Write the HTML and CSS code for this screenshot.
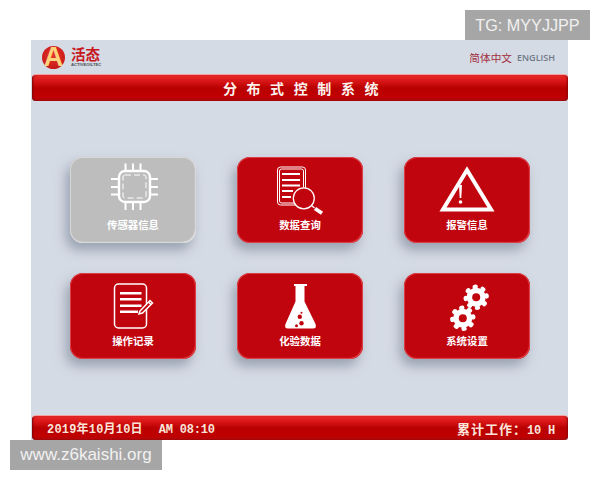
FILE: index.html
```html
<!DOCTYPE html>
<html lang="zh-CN">
<head>
    <meta charset="UTF-8">
    <meta name="viewport" content="width=device-width, initial-scale=1.0">
    <title>分布式控制系统</title>
    <link rel="stylesheet" href="styles.css">
</head>
<body>
    <div class="screen">
        <div class="top">
            <div class="logo">
                <div class="logo-mark">A</div>
                <div class="logo-text">
                    <div class="logo-cn">活态</div>
                    <div class="logo-en">ACTIVEOILTEC</div>
                </div>
            </div>
            <div class="lang">
                <span class="lang-cn">简体中文</span>
                <span class="lang-en">ENGLISH</span>
            </div>
        </div>

        <div class="bar title-bar">分布式控制系统</div>

        <div class="menu">
            <div class="card card-off">
                <svg class="icon" viewBox="0 0 56 56" fill="none" stroke="#fff">
                    <rect x="14" y="12" width="31" height="31" rx="6" stroke-width="2.400"/>
                    <rect x="18" y="16" width="23" height="23" rx="2" stroke-width="1" stroke-dasharray="6 3"/>
                    <path stroke-width="2" d="M20.500 4.500V11M28 4.500V11M35.500 4.500V11M20.500 44V51M28 44V51M35.500 44V51M6 20H13M6 28H13M6 35.500H13M46 20H53M46 28H53M46 35.500H53"/>
                </svg>
                <div class="card-label">传感器信息</div>
            </div>

            <div class="card">
                <svg class="icon" viewBox="0 0 56 56" fill="none" stroke="#fff">
                    <rect x="5.500" y="8" width="28" height="38" rx="3" stroke-width="1"/>
                    <rect x="7.500" y="10" width="24" height="34" rx="2" stroke-width="1"/>
                    <path stroke-width="2.200" d="M10 15H28M10 21H28M10 26.500H28M10 32H21M10 38H19"/>
                    <circle cx="31.800" cy="39.300" r="10.500" fill="#c1050f" stroke-width="1.300"/>
                    <path stroke-width="1.300" d="M39.500 46.500L42.500 49"/>
                    <path stroke-width="3.800" d="M43 49.500L50 54.300"/>
                </svg>
                <div class="card-label">数据查询</div>
            </div>

            <div class="card">
                <svg class="icon" viewBox="0 0 56 56" fill="none">
                    <path d="M28 11L4 50.500H52Z" stroke="#fff" stroke-width="4"/>
                    <path d="M20 26H23L22.300 39H20.700Z" fill="#fff"/>
                    <circle cx="21.500" cy="43" r="1.800" fill="#fff"/>
                </svg>
                <div class="card-label">报警信息</div>
            </div>

            <div class="card">
                <svg class="icon" viewBox="0 0 56 56" fill="none" stroke="#fff">
                    <rect x="9.500" y="9" width="32" height="44" rx="4" stroke-width="1.500"/>
                    <path stroke-width="2.400" d="M15 18.300H36.500M15 24.300H36.500M15 30.700H36.500M15 36.700H33"/>
                    <path d="M35 36L45 25.500L47.500 28L37.500 38L34 39Z" fill="#c1050f" stroke-width="1.500"/>
                    <path d="M43.500 27L46 29.500" stroke-width="1.500"/>
                </svg>
                <div class="card-label">操作记录</div>
            </div>

            <div class="card">
                <svg class="icon" viewBox="0 0 56 56">
                    <path d="M22 9H35V11H32.500V26.500L43.500 49Q45 53.500 41 53.500H16Q12 53.500 13.500 49L23.500 26.500V11H22Z" fill="#fff"/>
                    <circle cx="29.500" cy="37.700" r="1" fill="#c1050f"/>
                    <circle cx="27.800" cy="41.700" r="2.200" fill="#c1050f"/>
                    <circle cx="29.500" cy="48.300" r="2.200" fill="#c1050f"/>
                    <circle cx="24.500" cy="50.700" r="1.500" fill="#c1050f"/>
                </svg>
                <div class="card-label">化验数据</div>
            </div>

            <div class="card">
                <svg class="icon" viewBox="0 0 56 56">
                    <circle cx="37.200" cy="22.300" r="9.500" fill="#fff"/>
                    <circle cx="37.200" cy="22.300" r="10.500" fill="none" stroke="#fff" stroke-width="4.400" stroke-linecap="round" stroke-dasharray="1 7.250" transform="rotate(-10 37.200 22.300)"/>
                    <circle cx="37.200" cy="22.300" r="4" fill="#c1050f"/>
                    <circle cx="23.800" cy="43.300" r="9.500" fill="#fff"/>
                    <circle cx="23.800" cy="43.300" r="10.500" fill="none" stroke="#fff" stroke-width="4.400" stroke-linecap="round" stroke-dasharray="1 7.250" transform="rotate(-10 23.800 43.300)"/>
                    <circle cx="23.800" cy="43.300" r="4" fill="#c1050f"/>
                </svg>
                <div class="card-label">系统设置</div>
            </div>
        </div>

        <div class="bar foot-bar">
            <div class="foot-date">2019年10月10日<span class="foot-time">AM 08:10</span></div>
            <div class="foot-work">累计工作：<span class="foot-hours">10 H</span></div>
        </div>
    </div>

    <div class="mark mark-tg">TG: MYYJJPP</div>
    <div class="mark mark-site">www.z6kaishi.org</div>
</body>
</html>
```

FILE: styles.css
```css
body {
    font-family: "Noto Sans CJK SC", "Liberation Sans", sans-serif;
    background-color: #fff;
    margin: 0;
    padding: 40px 0 0 31px;
    height: 440px;
    overflow: hidden;
    position: relative;
}
.screen {
    width: 537px;
    height: 400px;
    background-color: #d5dbe5;
    display: flex;
    flex-direction: column;
}
.top {
    height: 34px;
    flex: none;
    display: flex;
    align-items: center;
    justify-content: space-between;
    padding: 0 13px 0 11px;
}
.logo {
    display: flex;
    align-items: center;
    gap: 6px;
}
.logo-mark {
    width: 23px;
    height: 23px;
    border-radius: 50%;
    background: radial-gradient(circle at 50% 40%, #e8342a, #bb0f14);
    color: #fcd27c;
    font-family: "Liberation Sans", sans-serif;
    font-size: 27px;
    font-weight: bold;
    line-height: 23px;
    text-align: center;
}
.logo-text {
    margin-top: -2px;
}
.logo-cn {
    color: #c8171d;
    font-size: 14.500px;
    font-weight: bold;
    line-height: 16px;
}
.logo-en {
    color: #4c4d55;
    font-family: "Liberation Sans", sans-serif;
    font-size: 4.200px;
    font-weight: bold;
    line-height: 5px;
}
.lang {
    display: flex;
    align-items: center;
    gap: 5px;
}
.lang-cn {
    color: #a3303f;
    font-size: 10.700px;
}
.lang-en {
    color: #6f7988;
    font-family: "Open Sans", sans-serif;
    font-size: 9px;
    font-weight: 600;
}
.bar {
    flex: none;
    margin-left: 1px;
    display: flex;
    align-items: center;
    border-radius: 4px;
    border-top: 1px solid #f4a2a0;
    box-sizing: border-box;
    background: linear-gradient(#e92a2a 0%, #da1718 22%, #b90000 50%, #c00001 85%, #a80a0c 100%);
    box-shadow: inset 2px 0 2px -1px #7e0508, inset -2px 0 2px -1px #8e0508;
}
.title-bar {
    height: 27px;
    justify-content: center;
    color: #fdf3ee;
    font-size: 14px;
    font-weight: bold;
    letter-spacing: 9.600px;
    text-indent: 11px;
}
.menu {
    flex: 1;
    display: grid;
    grid-template-columns: repeat(3, 126px);
    grid-auto-rows: 86px;
    column-gap: 41px;
    row-gap: 30px;
    padding: 56px 0 0 39px;
}
.card {
    box-sizing: border-box;
    padding-top: 2px;
    border-radius: 13px;
    background-color: #c1050f;
    box-shadow: inset 0 0 0 1px #dc4046, inset -1px -1px 1px #e0484c, -4px 7px 12px rgba(95, 105, 125, 0.5);
    display: flex;
    flex-direction: column;
    align-items: center;
}
.card-off {
    background-color: #bdbdbd;
    box-shadow: inset 0 0 0 1px #d8d8d8, inset -1px -1px 1px #f2f2f2, -4px 7px 12px rgba(95, 105, 125, 0.5);
}
.icon {
    width: 56px;
    height: 56px;
    flex: none;
}
.card-label {
    margin-top: 3px;
    color: #fff;
    font-size: 10.400px;
    font-weight: bold;
    line-height: 14px;
}
.foot-bar {
    height: 25px;
    justify-content: space-between;
    padding: 0 13px 0 15px;
    color: #fbe4da;
    font-family: "Liberation Mono", "Noto Sans CJK SC", monospace;
    font-size: 12px;
    font-weight: bold;
}
.foot-date {
    letter-spacing: 0.200px;
}
.foot-time {
    margin-left: 16px;
    letter-spacing: -0.200px;
}
.foot-work {
    font-size: 13px;
    letter-spacing: 1px;
}
.foot-hours {
    font-size: 12px;
    letter-spacing: -0.200px;
}
.mark {
    position: absolute;
    height: 30px;
    line-height: 30px;
    background-color: #a6a6a6;
    color: #f1f1f1;
    text-align: center;
    font-family: "Liberation Sans", sans-serif;
}
.mark-tg {
    left: 465px;
    top: 10px;
    width: 125px;
    font-size: 16.200px;
}
.mark-site {
    left: 10px;
    top: 440px;
    width: 152px;
    font-size: 17px;
}
```
